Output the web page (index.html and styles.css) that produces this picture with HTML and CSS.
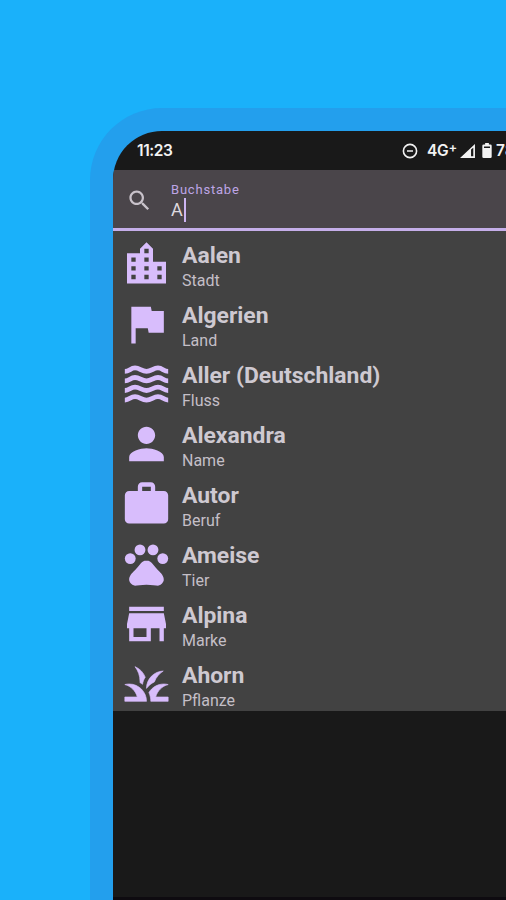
FILE: index.html
```html
<!DOCTYPE html>
<html lang="de">
<head>
<meta charset="utf-8">
<title>Buchstabe</title>
<link rel="stylesheet" href="styles.css">
</head>
<body>
<div class="device">
  <div class="screen">
    <header class="status">
      <span class="clock">11:23</span>
      <svg class="dnd" viewBox="0 0 16 16"><circle cx="8" cy="8" r="6.6"/><path d="M5 8h6"/></svg>
      <span class="network">4G<sup>+</sup></span>
      <svg class="signal" viewBox="0 0 16 15"><path d="M0 15L16 0v15zM11.8 6v7h2.4V4z" fill-rule="evenodd"/></svg>
      <svg class="battery" viewBox="0 0 10 16"><path d="M3 0h4v1.7h1.6Q10 1.7 10 3v11.6Q10 16 8.6 16H1.400Q0 16 0 14.600V3Q0 1.700 1.400 1.700H3zM1.800 3.800v1.400h6.400V3.800z" fill-rule="evenodd"/></svg>
      <span class="percent">78%</span>
    </header>
    <div class="search">
      <svg class="magnifier" viewBox="0 0 24 24"><path d="M15.500 14h-.79l-.28-.27C15.410 12.590 16 11.110 16 9.500 16 5.910 13.090 3 9.500 3S3 5.910 3 9.500 5.910 16 9.500 16c1.610 0 3.090-.59 4.230-1.570l.27.28v.79l5 4.990L20.490 19l-4.990-5zm-6 0C7.010 14 5 11.990 5 9.500S7.010 5 9.500 5 14 7.010 14 9.500 11.990 14 9.500 14z"/></svg>
      <div class="field">
        <span class="label">Buchstabe</span>
        <span class="value">A<i class="caret"></i></span>
      </div>
    </div>
    <ul class="results">
      <li><svg viewBox="0 0 24 24"><path d="M15 11V5l-3-3-3 3v2H3v14h18V11h-6zm-8 8H5v-2h2v2zm0-4H5v-2h2v2zm0-4H5V9h2v2zm6 8h-2v-2h2v2zm0-4h-2v-2h2v2zm0-4h-2V9h2v2zm0-4h-2V5h2v2zm6 12h-2v-2h2v2zm0-4h-2v-2h2v2z"/></svg><div><b>Aalen</b><span>Stadt</span></div></li>
      <li><svg viewBox="0 0 24 24"><path d="M14.400 6L14 4H5v17h2v-7h5.600l.4 2h7V6z"/></svg><div><b>Algerien</b><span>Land</span></div></li>
      <li><svg class="waves" viewBox="0 0 24 24"><path d="M2 6.200c2.200 0 2.500-1.600 4.700-1.600S9.700 6.200 12 6.200s3.100-1.600 5.300-1.600S19.800 6.200 22 6.200M2 10.600c2.200 0 2.500-1.600 4.700-1.600s3 1.600 5.300 1.600 3.100-1.600 5.300-1.600 2.500 1.600 4.700 1.600M2 15c2.200 0 2.500-1.600 4.700-1.600s3 1.600 5.300 1.600 3.100-1.600 5.300-1.600 2.500 1.600 4.700 1.600M2 19.400c2.200 0 2.500-1.600 4.700-1.600s3 1.600 5.300 1.600 3.100-1.600 5.300-1.600 2.500 1.600 4.700 1.600"/></svg><div><b>Aller (Deutschland)</b><span>Fluss</span></div></li>
      <li><svg viewBox="0 0 24 24"><path d="M12 12c2.210 0 4-1.790 4-4s-1.790-4-4-4-4 1.790-4 4 1.790 4 4 4zm0 2c-2.670 0-8 1.340-8 4v2h16v-2c0-2.660-5.330-4-8-4z"/></svg><div><b>Alexandra</b><span>Name</span></div></li>
      <li><svg viewBox="0 0 24 24"><path d="M20 6h-4V4c0-1.110-.89-2-2-2h-4c-1.110 0-2 .89-2 2v2H4c-1.110 0-1.990.89-1.990 2L2 19c0 1.110.89 2 2 2h16c1.110 0 2-.89 2-2V8c0-1.110-.89-2-2-2zm-6 0h-4V4h4v2z"/></svg><div><b>Autor</b><span>Beruf</span></div></li>
      <li><svg viewBox="0 0 24 24"><circle cx="4.500" cy="9.500" r="2.500"/><circle cx="9" cy="5.500" r="2.500"/><circle cx="15" cy="5.500" r="2.500"/><circle cx="19.500" cy="9.500" r="2.500"/><path d="M17.340 14.860c-.87-1.020-1.600-1.890-2.480-2.910-.46-.54-1.050-1.080-1.750-1.320-.11-.04-.22-.07-.33-.09-.25-.04-.52-.04-.78-.04s-.53 0-.79.05c-.11.02-.22.05-.33.09-.7.24-1.280.78-1.750 1.320-.87 1.020-1.600 1.890-2.480 2.910-1.310 1.310-2.920 2.760-2.620 4.790.29 1.020 1.020 2.030 2.330 2.320.73.15 3.060-.44 5.540-.44h.18c2.480 0 4.810.58 5.540.44 1.310-.29 2.040-1.310 2.330-2.320.31-2.040-1.300-3.490-2.610-4.800z"/></svg><div><b>Ameise</b><span>Tier</span></div></li>
      <li><svg viewBox="0 0 24 24"><path d="M20 4H4v2h16V4zm1 10v-2l-1-5H4l-1 5v2h1v6h10v-6h4v6h2v-6h1zm-9 4H6v-4h6v4z"/></svg><div><b>Alpina</b><span>Marke</span></div></li>
      <li><svg class="grass" viewBox="0 0 24 24"><path d="M12 20H2v-2h5.750C7.020 15.190 4.810 12.990 2 12.260c.64-.16 1.310-.26 2-.26 4.420 0 8 3.580 8 8zM22 12.260c-.64-.16-1.310-.26-2-.26-2.930 0-5.480 1.580-6.880 3.930.29.66.53 1.350.67 2.070.13.65.2 1.320.2 2h8v-2h-5.750c.74-2.810 2.950-5.010 5.760-5.740zM15.640 11.020c.78-2.090 2.230-3.840 4.090-5C15.440 6.160 12 9.670 12 14v.02c.95-1.270 2.200-2.300 3.640-3zM11.420 8.850C10.580 6.660 8.880 4.890 6.700 4 8.140 5.860 9 8.180 9 10.710c0 .21-.03.41-.04.61.43.24.83.52 1.220.82.13-1.150.55-2.330 1.240-3.290z"/></svg><div><b>Ahorn</b><span>Pflanze</span></div></li>
    </ul>
    <div class="rest"></div>
  </div>
</div>
</body>
</html>
```

FILE: styles.css
```css
* { box-sizing: border-box; }
body {
  margin: 0;
  height: 900px;
  overflow: hidden;
  padding: 108px 0 0 90px;
  background: #1ab1fa;
  font-family: Roboto, "Liberation Sans", sans-serif;
}
.device {
  height: 792px;
  padding: 23px 0 0 23px;
  background: #239fed;
  border-radius: 72px 0 0 0;
}
.screen {
  display: flex;
  flex-direction: column;
  height: 769px;
  overflow: hidden;
  background: #191919;
  border-radius: 49px 0 0 0;
}
.status {
  display: flex;
  flex: none;
  align-items: center;
  height: 39px;
  padding-left: 24px;
  overflow: hidden;
  white-space: nowrap;
  color: #f2f2f2;
  font: 600 15.5px/20px Inter, sans-serif;
}
.status svg { flex: none; fill: #f2f2f2; }
.clock { width: 265px; flex: none; letter-spacing: -0.4px; }
.status .dnd { width: 16px; height: 16px; fill: none; stroke: #f2f2f2; stroke-width: 1.6; }
.network { flex: none; width: 33px; margin-left: 9px; letter-spacing: -0.2px; }
.network sup { font-size: 13px; line-height: 0; vertical-align: 4px; }
.signal { width: 15px; height: 14px; }
.battery { width: 10px; height: 15px; margin: 0 4px 0 7px; }
.search {
  display: flex;
  flex: none;
  align-items: center;
  height: 61px;
  padding-left: 13px;
  background: #4a454a;
  border-bottom: 3px solid #c5aee9;
}
.magnifier { width: 27px; height: 27px; margin-top: 2px; fill: #c8c2ca; }
.field { display: flex; flex-direction: column; margin-left: 18px; padding-top: 4px; }
.label { color: #bea5e6; font-size: 13px; line-height: 17px; letter-spacing: 0.8px; }
.value { display: flex; align-items: center; height: 24px; color: #ded9df; font-size: 18px; }
.caret { width: 2px; height: 24px; margin-left: 1px; background: #cdb5f3; }
.results {
  flex: none;
  height: 480px;
  margin: 0;
  padding: 3px 0 0 7px;
  overflow: hidden;
  list-style: none;
  background: #424242;
}
.results li { display: flex; height: 60px; align-items: center; }
.results svg { width: 53px; height: 52px; flex: none; fill: #d8bdfc; }
.results .waves { fill: none; stroke: #d8bdfc; stroke-width: 2.2; }
.results .grass { stroke: #d8bdfc; stroke-width: 0.3; }
.results div { display: flex; flex-direction: column; margin-left: 9px; padding-top: 5px; white-space: nowrap; }
.results b { color: #cec9d1; font-size: 22.9px; line-height: 28px; font-weight: 700; }
.results span { color: #c4bfc7; font-size: 16px; line-height: 22px; }
.rest { flex: 1; border-bottom: 3px solid #0e0b10; }
```
